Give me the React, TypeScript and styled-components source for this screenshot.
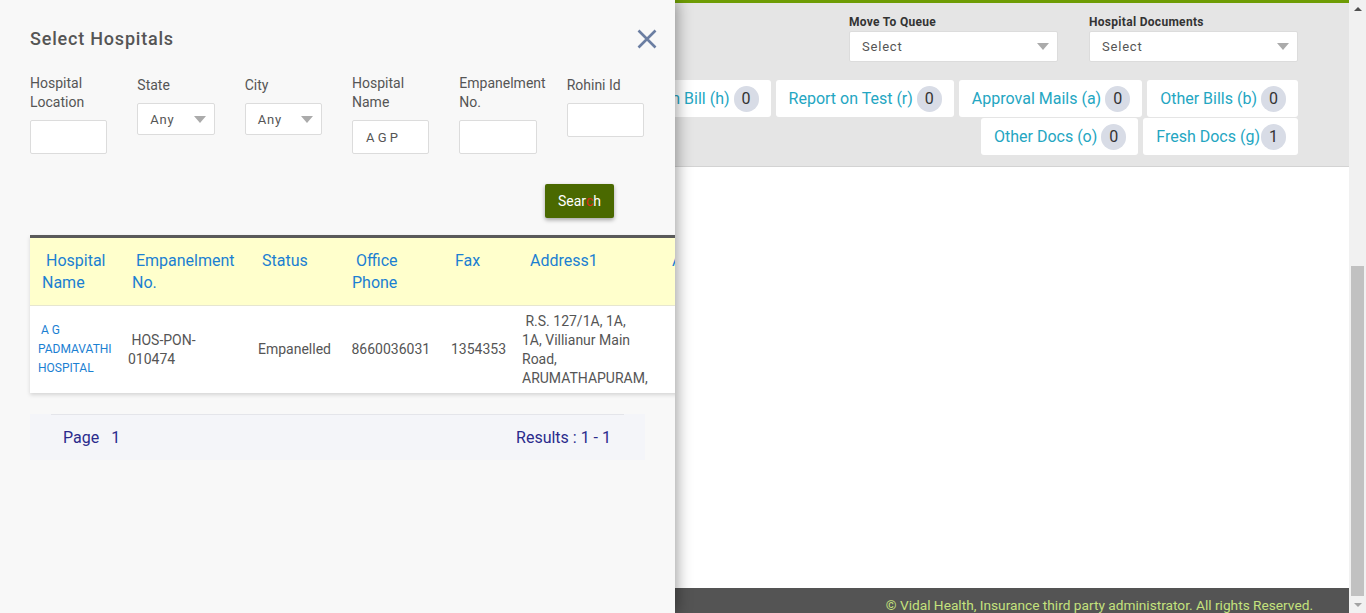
import React from 'react';
import styled, { createGlobalStyle } from 'styled-components';

const GlobalStyle = createGlobalStyle`
  html, body { margin: 0; padding: 0; height: 100%; overflow: hidden; }
  body { font-family: Roboto, "Noto Sans", "Liberation Sans", sans-serif; background: #fff; }
  * { box-sizing: border-box; }
`;

const Page = styled.div`
  position: relative;
  display: flex;
  width: 1366px;
  height: 613px;
  overflow: hidden;
`;

const Main = styled.div`
  flex: 1;
  display: flex;
  flex-direction: column;
  min-width: 0;
`;

const GreenBar = styled.div`
  height: 3px;
  background: #6e9c04;
  flex-shrink: 0;
`;

const Header = styled.div`
  height: 164px;
  flex-shrink: 0;
  background: #e5e5e5;
  border-bottom: 1px solid #d3d3d3;
  padding: 12px 51px 0 0;
  display: flex;
  flex-direction: column;
  align-items: flex-end;
`;

const DropRow = styled.div`
  display: flex;
  gap: 31px;
`;

const DropField = styled.div`
  width: 209px;
  display: flex;
  flex-direction: column;
`;

const DropLabel = styled.div`
  font-size: 12px;
  line-height: 14px;
  font-weight: 700;
  color: #333;
  letter-spacing: 0.3px;
  margin-bottom: 2px;
`;

const SelectBox = styled.div<{ $h: number }>`
  height: ${p => p.$h}px;
  width: 100%;
  background: #fff;
  border: 1px solid #dcdcdc;
  border-radius: 2px;
  display: flex;
  align-items: center;
  justify-content: space-between;
  padding: 0 8px 0 12px;
  font-size: 13px;
  color: #555;
  letter-spacing: 0.8px;
`;

const Caret = styled.span`
  width: 0;
  height: 0;
  border-left: 6px solid transparent;
  border-right: 6px solid transparent;
  border-top: 7px solid #ababab;
`;

const TabRow = styled.div<{ $top: number }>`
  display: flex;
  justify-content: flex-end;
  gap: 5px;
  margin-top: ${p => p.$top}px;
`;

const Tab = styled.div`
  flex-shrink: 0;
  height: 37px;
  background: #fff;
  border-radius: 3px;
  padding: 0 12px 0 13px;
  display: flex;
  align-items: center;
  color: #24a6c2;
  font-size: 16px;
  white-space: nowrap;
`;

const Badge = styled.span<{ $gap: number }>`
  margin-left: ${p => p.$gap}px;
  min-width: 25px;
  height: 26px;
  border-radius: 13px;
  background: #d8dce6;
  color: #333;
  font-size: 16px;
  display: flex;
  align-items: center;
  justify-content: center;
`;

const Content = styled.div`
  flex: 1;
  background: #fff;
`;

const Footer = styled.div`
  height: 25px;
  flex-shrink: 0;
  background: #545454;
  color: #c4e27d;
  font-size: 13.7px;
  line-height: 20px;
  padding: 7px 36px 0 0;
  text-align: right;
  overflow: hidden;
  white-space: nowrap;
`;

const Scrollbar = styled.div`
  width: 17px;
  flex-shrink: 0;
  background: #f1f1f1;
  display: flex;
  flex-direction: column;
  align-items: center;
`;

const ArrowCell = styled.div`
  height: 17px;
  width: 17px;
  flex-shrink: 0;
  display: flex;
  align-items: center;
  justify-content: center;
`;

const ArrowUp = styled.span`
  width: 0;
  height: 0;
  border-left: 4px solid transparent;
  border-right: 4px solid transparent;
  border-bottom: 4px solid #505050;
`;

const ArrowDown = styled.span`
  width: 0;
  height: 0;
  border-left: 4px solid transparent;
  border-right: 4px solid transparent;
  border-top: 4px solid #a3a3a3;
`;

const Thumb = styled.div`
  width: 13px;
  height: 330px;
  margin-top: 249px;
  background: #c1c1c1;
  flex-shrink: 0;
`;

/* Drawer */
const Drawer = styled.aside`
  position: absolute;
  top: 0;
  left: 0;
  z-index: 10;
  width: 675px;
  height: 613px;
  background: #f8f8f8;
  box-shadow: 2px 0 14px rgba(0, 0, 0, 0.38);
  padding: 0 30px;
  overflow: hidden;
`;

const TitleRow = styled.div`
  margin-top: 27px;
  height: 24px;
  display: flex;
  align-items: center;
  justify-content: space-between;
`;

const Title = styled.h2`
  margin: 0;
  font-size: 18px;
  line-height: 24px;
  font-weight: 500;
  color: #555;
  letter-spacing: 0.8px;
`;

const CloseBtn = styled.button`
  border: 0;
  padding: 0;
  background: none;
  margin-right: -12px;
  width: 20px;
  height: 20px;
  display: flex;
  cursor: pointer;
`;

const FilterGrid = styled.div`
  margin-top: 23px;
  margin-right: 1px;
  display: grid;
  grid-template-columns: repeat(6, minmax(0, 1fr));
  column-gap: 30px;
  align-items: start;
`;

const Field = styled.div`
  display: flex;
  flex-direction: column;
`;

const FieldLabel = styled.label<{ $offset?: number }>`
  font-size: 14px;
  line-height: 19px;
  color: #555;
  margin-top: ${p => p.$offset || 0}px;
  margin-bottom: 8px;
`;

const TextInput = styled.div`
  height: 34px;
  background: #fff;
  border: 1px solid #dcdcdc;
  border-radius: 2px;
  padding: 0 13px;
  display: flex;
  align-items: center;
  font-size: 13px;
  color: #555;
`;

const SearchRow = styled.div`
  margin-top: 30px;
  display: flex;
  justify-content: flex-end;
  padding-right: 31px;
`;

const SearchButton = styled.button`
  width: 69px;
  height: 34px;
  border: 0;
  border-radius: 2px;
  background: #4a6900;
  color: #fff;
  font-family: inherit;
  font-size: 14px;
  box-shadow: 0 2px 4px rgba(0, 0, 0, 0.35);
  padding: 0;
`;

const Accent = styled.span`
  color: #e0281c;
`;

const TableWrap = styled.div`
  margin-top: 17px;
  width: 900px;
  border-top: 3px solid #5a5a5a;
  box-shadow: 0 2px 4px rgba(0, 0, 0, 0.14);
`;

const Table = styled.table`
  width: 900px;
  border-collapse: collapse;
  table-layout: fixed;
`;

const HeadRow = styled.tr`
  background: #ffffcc;
  border-bottom: 1px solid #e6e6d0;
`;

const HeadCell = styled.th`
  text-align: left;
  vertical-align: top;
  font-weight: 400;
  font-size: 16px;
  line-height: 22px;
  color: #1b80d2;
  padding: 12px 2px 10px 12px;
  height: 67px;
`;

const BodyRow = styled.tr`
  background: #fff;
`;

const BodyCell = styled.td<{ $link?: boolean }>`
  vertical-align: middle;
  padding: 6px 12px 5px 8px;
  height: 87px;
  font-size: ${p => (p.$link ? '12px' : '14px')};
  line-height: 19px;
  color: ${p => (p.$link ? '#1b80d2' : '#555')};
`;

const Pager = styled.div`
  margin-top: 21px;
  width: 615px;
  height: 46px;
  background: #f4f5f9;
  padding: 0 21px;
`;

const PagerInner = styled.div`
  height: 100%;
  border-top: 1px solid #e4e5ea;
  display: flex;
  align-items: center;
  justify-content: space-between;
  padding: 0 13px 0 12px;
  font-size: 16px;
  color: #2a2b8c;
`;

const PageNum = styled.span`
  margin-left: 12px;
`;

const cols = [90, 130, 90, 103, 71, 146, 270];

const topTabs = [
  { label: 'Discharge Summary (d)', n: 0, gap: 4 },
  { label: 'Investigation Bill (h)', n: 0, gap: 4 },
  { label: 'Report on Test (r)', n: 0, gap: 4 },
  { label: 'Approval Mails (a)', n: 0, gap: 4 },
  { label: 'Other Bills (b)', n: 0, gap: 4 },
];
const bottomTabs = [
  { label: 'Other Docs (o)', n: 0, gap: 4 },
  { label: 'Fresh Docs (g)', n: 1, gap: 1 },
];

const filters = [
  { label: 'Hospital Location', kind: 'input', value: '' },
  { label: 'State', kind: 'select', value: 'Any', offset: 2 },
  { label: 'City', kind: 'select', value: 'Any', offset: 2 },
  { label: 'Hospital Name', kind: 'input', value: 'A G P' },
  { label: 'Empanelment No.', kind: 'input', value: '' },
  { label: 'Rohini Id', kind: 'input', value: '', offset: 2 },
];

export default function App() {
  return (
    <>
      <GlobalStyle />
      <Page>
        <Main>
          <GreenBar />
          <Header>
            <DropRow>
              <DropField>
                <DropLabel>Move To Queue</DropLabel>
                <SelectBox $h={31}>
                  Select <Caret />
                </SelectBox>
              </DropField>
              <DropField>
                <DropLabel>Hospital Documents</DropLabel>
                <SelectBox $h={31}>
                  Select <Caret />
                </SelectBox>
              </DropField>
            </DropRow>
            <TabRow $top={18}>
              {topTabs.map(t => (
                <Tab key={t.label}>
                  {t.label}
                  <Badge $gap={t.gap}>{t.n}</Badge>
                </Tab>
              ))}
            </TabRow>
            <TabRow $top={1}>
              {bottomTabs.map(t => (
                <Tab key={t.label}>
                  {t.label}
                  <Badge $gap={t.gap}>{t.n}</Badge>
                </Tab>
              ))}
            </TabRow>
          </Header>
          <Content />
          <Footer>© Vidal Health, Insurance third party administrator. All rights Reserved.</Footer>
        </Main>
        <Scrollbar>
          <ArrowCell>
            <ArrowUp />
          </ArrowCell>
          <Thumb />
          <ArrowCell>
            <ArrowDown />
          </ArrowCell>
        </Scrollbar>

        <Drawer>
          <TitleRow>
            <Title>Select Hospitals</Title>
            <CloseBtn aria-label="Close">
              <svg width="20" height="20" viewBox="0 0 20 20">
                <path d="M1.5 1.5 L18.5 18.5 M18.5 1.5 L1.5 18.5" stroke="#6b7ea2" strokeWidth="2.6" fill="none" />
              </svg>
            </CloseBtn>
          </TitleRow>

          <FilterGrid>
            {filters.map(f => (
              <Field key={f.label}>
                <FieldLabel $offset={f.offset}>{f.label}</FieldLabel>
                {f.kind === 'select' ? (
                  <SelectBox $h={32}>
                    {f.value} <Caret />
                  </SelectBox>
                ) : (
                  <TextInput>{f.value}</TextInput>
                )}
              </Field>
            ))}
          </FilterGrid>

          <SearchRow>
            <SearchButton>
              Sear<Accent>c</Accent>h
            </SearchButton>
          </SearchRow>

          <TableWrap>
            <Table>
              <colgroup>
                {cols.map((w, i) => (
                  <col key={i} style={{ width: w }} />
                ))}
              </colgroup>
              <thead>
                <HeadRow>
                  <HeadCell>{'\u00a0Hospital Name'}</HeadCell>
                  <HeadCell>{'\u00a0Empanelment No.'}</HeadCell>
                  <HeadCell>Status</HeadCell>
                  <HeadCell>{'\u00a0Office Phone'}</HeadCell>
                  <HeadCell>Fax</HeadCell>
                  <HeadCell>{'\u00a0Address1'}</HeadCell>
                  <HeadCell>Address2</HeadCell>
                </HeadRow>
              </thead>
              <tbody>
                <BodyRow>
                  <BodyCell $link>{'\u00a0A G PADMAVATHI HOSPITAL'}</BodyCell>
                  <BodyCell>{'\u00a0HOS-PON-010474'}</BodyCell>
                  <BodyCell>Empanelled</BodyCell>
                  <BodyCell>{'\u00a08660036031'}</BodyCell>
                  <BodyCell>1354353</BodyCell>
                  <BodyCell>{'\u00a0R.S. 127/1A, 1A, 1A, Villianur Main Road, ARUMATHAPURAM,'}</BodyCell>
                  <BodyCell></BodyCell>
                </BodyRow>
              </tbody>
            </Table>
          </TableWrap>

          <Pager>
            <PagerInner>
              <span>
                Page<PageNum>1</PageNum>
              </span>
              <span>Results : 1 - 1</span>
            </PagerInner>
          </Pager>
        </Drawer>
      </Page>
    </>
  );
}
